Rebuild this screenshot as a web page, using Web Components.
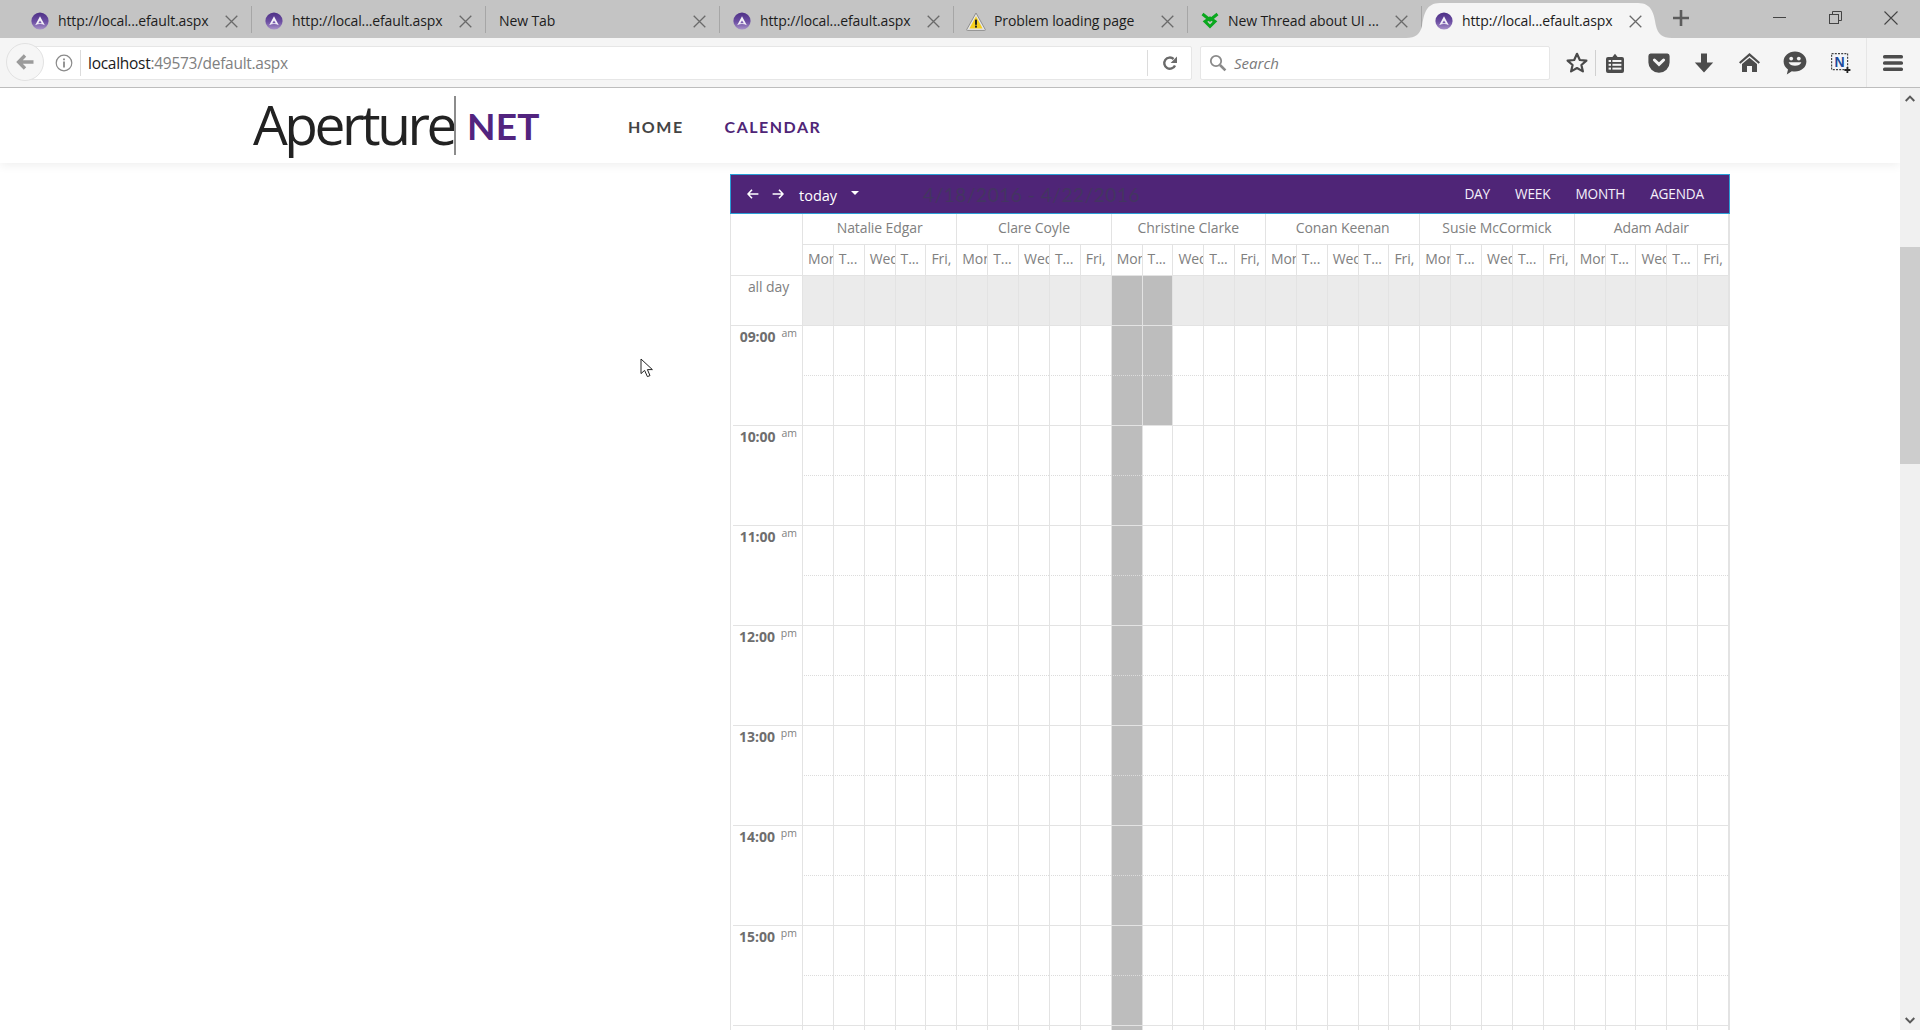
<!DOCTYPE html>
<html><head><meta charset="utf-8"><title>Calendar</title>
<style>
html,body{margin:0;padding:0;height:100%;overflow:hidden;background:#fff;font-family:"Open Sans","Liberation Sans",sans-serif}
</style></head><body>
<x-app>
  <x-tabstrip>
    <x-tab icon="fav">http://local...efault.aspx</x-tab>
    <x-tab icon="fav">http://local...efault.aspx</x-tab>
    <x-tab>New Tab</x-tab>
    <x-tab icon="fav">http://local...efault.aspx</x-tab>
    <x-tab icon="warn">Problem loading page</x-tab>
    <x-tab icon="thread">New Thread about UI ...</x-tab>
    <x-tab icon="fav" active>http://local...efault.aspx</x-tab>
  </x-tabstrip>
  <x-navbar></x-navbar>
  <x-viewport>
    <x-site-header></x-site-header>
    <x-calendar></x-calendar>
  </x-viewport>
</x-app>
<script>
const ICONS={
 fav:`<svg width="18" height="18" viewBox="0 0 18 18"><defs><linearGradient id="g" x1="0" y1="0" x2="0" y2="1"><stop offset="0" stop-color="#4d2f86"/><stop offset=".55" stop-color="#6d4fa3"/><stop offset="1" stop-color="#a892c9"/></linearGradient></defs><circle cx="9" cy="9" r="8.6" fill="url(#g)"/><path d="M9 4.2 13.8 13.2Q9 10.6 4.2 13.2Z" fill="#f3f0f8"/><path d="M9 8.4 10.8 11.2H7.2Z" fill="#7a5db0"/></svg>`,
 warn:`<svg width="20" height="19" viewBox="0 0 20 19"><path d="M10 1 19.3 17.6Q19.5 18.4 18.6 18.4H1.4Q.5 18.4.7 17.6Z" fill="#e6e6e6" stroke="#8e8e8e"/><path d="M10 4.2 16.6 16.4H3.4Z" fill="#f5cf1e"/><rect x="9" y="7.6" width="2" height="5.2" fill="#222"/><rect x="9" y="13.6" width="2" height="2" fill="#222"/></svg>`,
 thread:`<svg width="18" height="18" viewBox="0 0 18 18" fill="none" stroke="#0aa81e" stroke-width="3"><path d="M1.5 2 9 8 16.5 2"/><path d="M4 9.5 9 14.5 14 9.5 9 6Z"/></svg>`,
 close:`<svg width="13" height="13" viewBox="0 0 13 13" stroke="#6a6a6a" stroke-width="1.3"><path d="M.7.7 12.3 12.3M12.3.7.7 12.3"/></svg>`,
 back:`<svg width="18" height="16" viewBox="0 0 18 16" fill="none" stroke="#9b9b9b" stroke-width="3.4"><path d="M9 1.5 2.6 8 9 14.5M3 8H17.5"/></svg>`,
 info:`<svg width="18" height="18" viewBox="0 0 18 18" fill="none" stroke="#8a8a8a"><circle cx="9" cy="9" r="7.8" stroke-width="1.2"/><path d="M9 7.6V13.5" stroke-width="1.8"/><path d="M9 4.4V6.2" stroke-width="1.8"/></svg>`,
 reload:`<svg width="16" height="16" viewBox="0 0 16 16" fill="none"><path d="M13 10.4A5.6 5.6 0 1 1 11.6 4" stroke="#6a6a6a" stroke-width="2.4"/><path d="M15 1.6V8H8.6Z" fill="#6a6a6a"/></svg>`,
 search:`<svg width="18" height="18" viewBox="0 0 18 18" fill="none" stroke="#8a8a8a" stroke-width="1.8"><circle cx="7" cy="7" r="5.2"/><path d="M11 11 16.4 16.4" stroke-width="2.6"/></svg>`,
 star:`<svg width="22" height="21" viewBox="0 0 22 21" fill="none" stroke="#4a4a4a" stroke-width="2.2" stroke-linejoin="round"><path d="M11 1.8 13.8 8 20.4 8.6 15.4 13 16.9 19.4 11 16 5.1 19.4 6.6 13 1.6 8.6 8.2 8Z"/></svg>`,
 list:`<svg width="18" height="20" viewBox="0 0 18 20"><path d="M2 4H6.4L9 .8 11.6 4H16A2 2 0 0 1 18 6V18A2 2 0 0 1 16 20H2A2 2 0 0 1 0 18V6A2 2 0 0 1 2 4Z" fill="#4c4c4c"/><g fill="#f5f5f5"><rect x="2.6" y="7" width="2.4" height="2"/><rect x="6.4" y="7" width="9" height="2"/><rect x="2.6" y="10.8" width="2.4" height="2"/><rect x="6.4" y="10.8" width="9" height="2"/><rect x="2.6" y="14.6" width="2.4" height="2"/><rect x="6.4" y="14.6" width="9" height="2"/></g></svg>`,
 pocket:`<svg width="22" height="20" viewBox="0 0 22 20"><path d="M2.6.6H19.4A2.4 2.4 0 0 1 21.6 3V9.4A10.6 10.4 0 0 1 .4 9.4V3A2.4 2.4 0 0 1 2.6.6Z" fill="#4c4c4c"/><path d="M6.4 7 11 11.4 15.6 7" fill="none" stroke="#f5f5f5" stroke-width="3" stroke-linecap="round"/></svg>`,
 down:`<svg width="20" height="20" viewBox="0 0 20 20"><path d="M7 .6H13V9.6H19.2L10 19.4.8 9.6H7Z" fill="#4c4c4c"/></svg>`,
 home:`<svg width="21" height="19" viewBox="0 0 21 19"><path d="M10.5 0 21 9.2 19.6 10.8 10.5 3 1.4 10.8 0 9.2Z" fill="#4c4c4c"/><path d="M10.5 4.8 18 11V19H13V13H8V19H3V11Z" fill="#4c4c4c"/></svg>`,
 smile:`<svg width="24" height="24" viewBox="0 0 24 24"><path d="M12 .6C18.4.6 23.4 5 23.4 10.6S18.4 20.6 12 20.6C10.8 20.6 9.8 20.4 8.8 20.2L3.8 23.4 5 18.4C2.2 16.6.6 13.8.6 10.6.6 5 5.6.6 12 .6Z" fill="#4c4c4c"/><circle cx="8.2" cy="7.6" r="1.9" fill="#f5f5f5"/><circle cx="15.8" cy="7.6" r="1.9" fill="#f5f5f5"/><path d="M5.6 11.2C7 16 17 16 18.4 11.2Z" fill="#f5f5f5"/></svg>`,
 ntool:`<svg width="20" height="20" viewBox="0 0 20 20"><rect x=".6" y=".6" width="16" height="16" fill="#f2f4f8" stroke="#444" stroke-width="1.2" stroke-dasharray="2 1.2"/><text x="8.6" y="14" text-anchor="middle" font-family="Liberation Sans" font-weight="700" font-size="14" fill="#1b4a9c">N</text><path d="M16.4 14V20M13.4 17H19.4" stroke="#222" stroke-width="1.8"/></svg>`,
 burger:`<svg width="20" height="16" viewBox="0 0 20 16" fill="#4c4c4c"><rect y="0" width="20" height="3.6" rx="1.6"/><rect y="6.2" width="20" height="3.6" rx="1.6"/><rect y="12.4" width="20" height="3.6" rx="1.6"/></svg>`,
 plus:`<svg width="16" height="16" viewBox="0 0 16 16" stroke="#5c5c5c" stroke-width="2.6"><path d="M8 0V16M0 8H16"/></svg>`,
 min:`<svg width="13" height="3" viewBox="0 0 13 3"><path d="M0 1.5H13" stroke="#444" stroke-width="1"/></svg>`,
 restore:`<svg width="13" height="13" viewBox="0 0 13 13" fill="none" stroke="#444"><rect x=".5" y="3.5" width="9" height="9"/><path d="M3.5 3.5V.5H12.5V9.5H9.5"/></svg>`,
 winx:`<svg width="14" height="14" viewBox="0 0 14 14" stroke="#444" stroke-width="1.1"><path d="M.5.5 13.5 13.5M13.5.5.5 13.5"/></svg>`,
 prev:`<svg width="12" height="10" viewBox="0 0 12 10" fill="none" stroke="#fff" stroke-width="1.6"><path d="M5 .8 1 5 5 9.2M1.4 5H11.4"/></svg>`,
 next:`<svg width="12" height="10" viewBox="0 0 12 10" fill="none" stroke="#fff" stroke-width="1.6"><path d="M7 .8 11 5 7 9.2M10.6 5H.6"/></svg>`,
 up:`<svg width="10" height="7" viewBox="0 0 10 7" fill="none" stroke="#5a5a5a" stroke-width="2"><path d="M.7 6 5 1.6 9.3 6"/></svg>`,
 dn:`<svg width="10" height="7" viewBox="0 0 10 7" fill="none" stroke="#5a5a5a" stroke-width="2"><path d="M.7 1 5 5.4 9.3 1"/></svg>`,
 cursor:`<svg width="14" height="20" viewBox="0 0 14 20"><path d="M1 1V15.6L4.6 12.4 7.4 18.6 10 17.6 7.4 11.6H12.4Z" fill="#fff" stroke="#222" stroke-width="1"/></svg>`
};
function def(name,css,html,extra){
  customElements.define(name,class extends HTMLElement{
    constructor(){super();const r=this.attachShadow({mode:'open'});r.innerHTML=`<style>${css}</style>`+(typeof html==='function'?html(this):html);}
    connectedCallback(){if(extra)extra(this);}
  });
}
def('x-icon',`:host{display:inline-flex;align-items:center;justify-content:center;flex:none}svg{display:block}`,'',el=>{
  el.shadowRoot.innerHTML=`<style>:host{display:inline-flex;align-items:center;justify-content:center;flex:none}svg{display:block}</style>`+(ICONS[el.getAttribute('name')]||'');
});
def('x-app',`:host{display:flex;flex-direction:column;width:1920px;height:1030px;overflow:hidden;position:relative}`,`<slot></slot>`);
def('x-tabstrip',`
:host{display:flex;flex:none;height:38px;background:#c4c4c4;padding-left:18px;box-sizing:border-box;position:relative}
.tabs{display:flex}
.plus{width:50px;height:38px;display:flex;align-items:center;justify-content:center;padding-bottom:2px;box-sizing:border-box}
.sp{flex:1}
.win{width:56px;height:35px;display:flex;align-items:center;justify-content:center}
.end{width:1px}
`,`<div class="tabs"><slot></slot></div><div class="plus"><x-icon name="plus"></x-icon></div><div class="sp"></div>
<div class="win"><x-icon name="min"></x-icon></div><div class="win"><x-icon name="restore"></x-icon></div><div class="win"><x-icon name="winx"></x-icon></div><div class="end"></div>`);
def('x-tab',`
:host{display:flex;align-items:center;width:234px;height:38px;box-sizing:border-box;padding:4px 14px 0 13px;position:relative;font:14px "Open Sans",sans-serif;letter-spacing:-.12px;color:#1c1c1c;white-space:nowrap}
.ic{width:18px;height:18px;margin-right:9px;display:flex;align-items:center;justify-content:center;position:relative}
.t{flex:1;overflow:hidden;position:relative;margin-top:-1px}
.x{position:relative;display:flex}
.sep{position:absolute;right:0;top:6px;height:27px;width:1px;background:#a6a6a6}
.shape{position:absolute;left:-16px;top:0;display:none}
:host([active]) .shape{display:block}
:host([active]) .sep,:host([noicon]) .ic{display:none}
`,el=>`<svg class="shape" width="266" height="38" viewBox="0 0 266 38"><path d="M0 38C10 38 14 34 16 26 18 14 20 3 34 3L232 3C246 3 248 14 250 26 252 34 256 38 266 38Z" fill="#f5f5f5"/></svg>
<div class="ic"></div><div class="t"><slot></slot></div><div class="x"><x-icon name="close"></x-icon></div><div class="sep"></div>`,el=>{
  const n=el.getAttribute('icon');
  const ic=el.shadowRoot.querySelector('.ic');
  if(n)ic.innerHTML=`<x-icon name="${n}"></x-icon>`;else{ic.style.width='0';ic.style.marginRight='0';el.style.paddingLeft='13px';}
  if(n==='thread')ic.style.marginLeft='0';
});
def('x-navbar',`
:host{display:flex;flex:none;height:50px;box-sizing:border-box;background:#f5f5f5;border-bottom:1px solid #bdbdbd;align-items:center;position:relative;font:14px "Open Sans",sans-serif}
.back{position:absolute;left:6px;top:5px;width:38px;height:38px;border-radius:50%;background:#f6f6f6;border:1px solid #e2e2e2;box-sizing:border-box;display:flex;align-items:center;justify-content:center}
.url{margin-left:25px;width:1167px;height:34px;background:#fff;border:1px solid #e6e6e6;border-radius:2px;box-sizing:border-box;display:flex;align-items:center;padding-left:29px}
.info{width:18px;margin-right:7px}
.bar{width:1px;height:26px;background:#dcdcdc}
.addr{margin-left:7px;flex:1;font-size:15.5px;letter-spacing:-.28px;color:#1a1a1a}
.addr span{color:#808080}
.rel{width:43px;display:flex;justify-content:center}
.search{margin-left:8px;width:350px;height:34px;background:#fff;border:1px solid #e6e6e6;border-radius:2px;box-sizing:border-box;display:flex;align-items:center;padding-left:8px;font-style:italic;color:#7a7a7a;font-size:15px}
.search x-icon{margin-right:7px}
.star{margin-left:9px;width:36px}
.vs{width:1px;height:26px;background:#d0d0d0}
.l{width:37px}.gap{width:3px}.s{width:45.5px}
.ve{margin-left:2.5px;width:1px;height:49px;background:#e6e6e6}
.bg{width:51px}
`,`<div class="url"><x-icon class="info" name="info"></x-icon><div class="bar"></div><div class="addr">localhost<span>:49573/default.aspx</span></div><div class="bar"></div><div class="rel"><x-icon name="reload"></x-icon></div></div>
<div class="back"><x-icon name="back"></x-icon></div>
<div class="search"><x-icon name="search"></x-icon>Search</div>
<x-icon class="star" name="star"></x-icon><div class="vs"></div><x-icon class="l" name="list"></x-icon><div class="gap"></div>
<x-icon class="s" name="pocket"></x-icon><x-icon class="s" name="down"></x-icon><x-icon class="s" name="home"></x-icon><x-icon class="s" name="smile"></x-icon><x-icon class="s" name="ntool"></x-icon>
<div class="ve"></div><x-icon class="bg" name="burger"></x-icon>`);
def('x-viewport',`
:host{display:flex;flex:1;min-height:0;position:relative}
.page{flex:1;min-width:0;overflow:hidden}
.bar{width:20px;flex:none;background:#f0f0f0;display:flex;flex-direction:column}
.a{height:20px;display:flex;align-items:center;justify-content:center}
.th{height:217px;margin-top:139px;background:#cdcdcd}
.sp{flex:1}
.cur{position:absolute;left:640px;top:270px}
`,`<div class="page"><slot></slot></div><div class="bar"><div class="a"><x-icon name="up"></x-icon></div><div class="th"></div><div class="sp"></div><div class="a"><x-icon name="dn"></x-icon></div></div><x-icon class="cur" name="cursor"></x-icon>`);
def('x-site-header',`
:host{display:flex;height:75px;align-items:center;padding-left:253px;background:#fff;box-shadow:0 2px 10px rgba(0,0,0,.07);position:relative;box-sizing:border-box}
.ap{font:400 55px/60px "Open Sans",sans-serif;letter-spacing:-3.45px;color:#222;width:201px;margin-top:-3px;white-space:nowrap}
.v{width:2px;height:59px;background:#8c8c8c;margin-top:-1px}
.net{font:700 37px/40px "Lato",sans-serif;color:#52247f;margin-left:11px;width:66px;letter-spacing:.2px;margin-top:1px}
a{font:700 16px "Lato",sans-serif;letter-spacing:1.5px;color:#444;text-decoration:none;margin-top:1px}
.h{margin-left:95px}.c{margin-left:41px;color:#4f2577}
`,`<div class="ap">Aperture</div><div class="v"></div><div class="net">NET</div><a class="h">HOME</a><a class="c">CALENDAR</a>`);
const RES=['Natalie Edgar','Clare Coyle','Christine Clarke','Conan Keenan','Susie McCormick','Adam Adair'];
const DAYS=['Mon','T...','Wed','T...','Fri,'];
def('x-calendar',`
:host{display:block;width:1000px;margin:11px 0 0 730px;font:14px "Open Sans",sans-serif;color:#808080}
.tb{height:40px;box-sizing:border-box;background:#4f2577;border:1px solid #2a9fd6;display:flex;align-items:center;color:#fff;white-space:nowrap}
.pv{margin-left:16px}.nx{margin-left:13px}
.today{margin-left:15px;font-size:14.5px;margin-top:2px}
.car{margin-left:14px;margin-top:-3px;width:0;height:0;border:4px solid transparent;border-top-color:#fff;border-bottom:0}
.title{margin-left:64px;font:400 19px "Lato",sans-serif;letter-spacing:.55px;color:#433561}
.views{margin-left:auto;display:flex;gap:25px;padding-right:25px;font-size:13.6px;margin-top:-2px;letter-spacing:-.15px;color:#f4f0fb}
.body{border-left:1px solid #e3e3e3;border-right:2px solid #e3e3e3}
.g{display:grid;grid-template-columns:71px repeat(30,minmax(0,1fr));}
.ax0{grid-row:span 2;border-bottom:1px solid #e3e3e3}
.name{grid-column:span 5;height:31px;box-sizing:border-box;border-left:1px solid #e3e3e3;border-bottom:1px solid #e3e3e3;text-align:center;line-height:28px;white-space:nowrap;overflow:hidden;letter-spacing:-.1px}
.day{height:31px;box-sizing:border-box;border-left:1px solid #e3e3e3;border-bottom:1px solid #e3e3e3;padding-left:5px;line-height:28px;white-space:nowrap;overflow:hidden;letter-spacing:-.1px}
.adl{height:50px;box-sizing:border-box;border-bottom:1px solid #e3e3e3;text-align:center;line-height:22px;padding-left:4px;letter-spacing:-.1px}
.c{box-sizing:border-box;border-left:1px solid #e3e3e3;height:50px}
.ad{background:#ebebeb;border-bottom:1px solid #e3e3e3}
.h1{border-bottom:1px dotted #dcdcdc}
.h2{border-bottom:1px solid #e3e3e3}
.busy{background-color:#bdbdbd}
.a1{height:50px;box-sizing:border-box;display:flex;justify-content:flex-end;padding-right:5px;gap:6px;color:#6e6e6e}
.a1 b{font-weight:700;font-size:14px;line-height:22px;letter-spacing:-.05px}
.a1 i{font-style:normal;font-size:10.5px;line-height:14px;color:#808080}
.a2{height:50px;box-sizing:border-box;background:linear-gradient(#e3e3e3,#e3e3e3) 2px 100%/calc(100% - 2px) 1px no-repeat}
`,()=>{
  let h=`<div class="tb"><x-icon class="pv" name="prev"></x-icon><x-icon class="nx" name="next"></x-icon><span class="today">today</span><span class="car"></span><span class="title">4/18/2016 - 4/22/2016</span><div class="views"><span>DAY</span><span>WEEK</span><span>MONTH</span><span>AGENDA</span></div></div>`;
  h+=`<div class="body"><div class="g"><div class="ax0"></div>`;
  RES.forEach(r=>h+=`<div class="name">${r}</div>`);
  RES.forEach(()=>DAYS.forEach(d=>h+=`<div class="day">${d}</div>`));
  h+=`<div class="adl">all day</div>`;
  for(let i=0;i<30;i++)h+=`<div class="c ad${i==10||i==11?' busy':''}"></div>`;
  const hrs=[['09:00','am'],['10:00','am'],['11:00','am'],['12:00','pm'],['13:00','pm'],['14:00','pm'],['15:00','pm'],['16:00','pm']];
  hrs.forEach((t,n)=>{
    h+=`<div class="a1"><b>${t[0]}</b><i>${t[1]}</i></div>`;
    for(let i=0;i<30;i++)h+=`<div class="c h1${i==10||(i==11&&n==0)?' busy':''}"></div>`;
    h+=`<div class="a2"></div>`;
    for(let i=0;i<30;i++)h+=`<div class="c h2${i==10||(i==11&&n==0)?' busy':''}"></div>`;
  });
  return h+`</div></div>`;
});
</script>
</body></html>
